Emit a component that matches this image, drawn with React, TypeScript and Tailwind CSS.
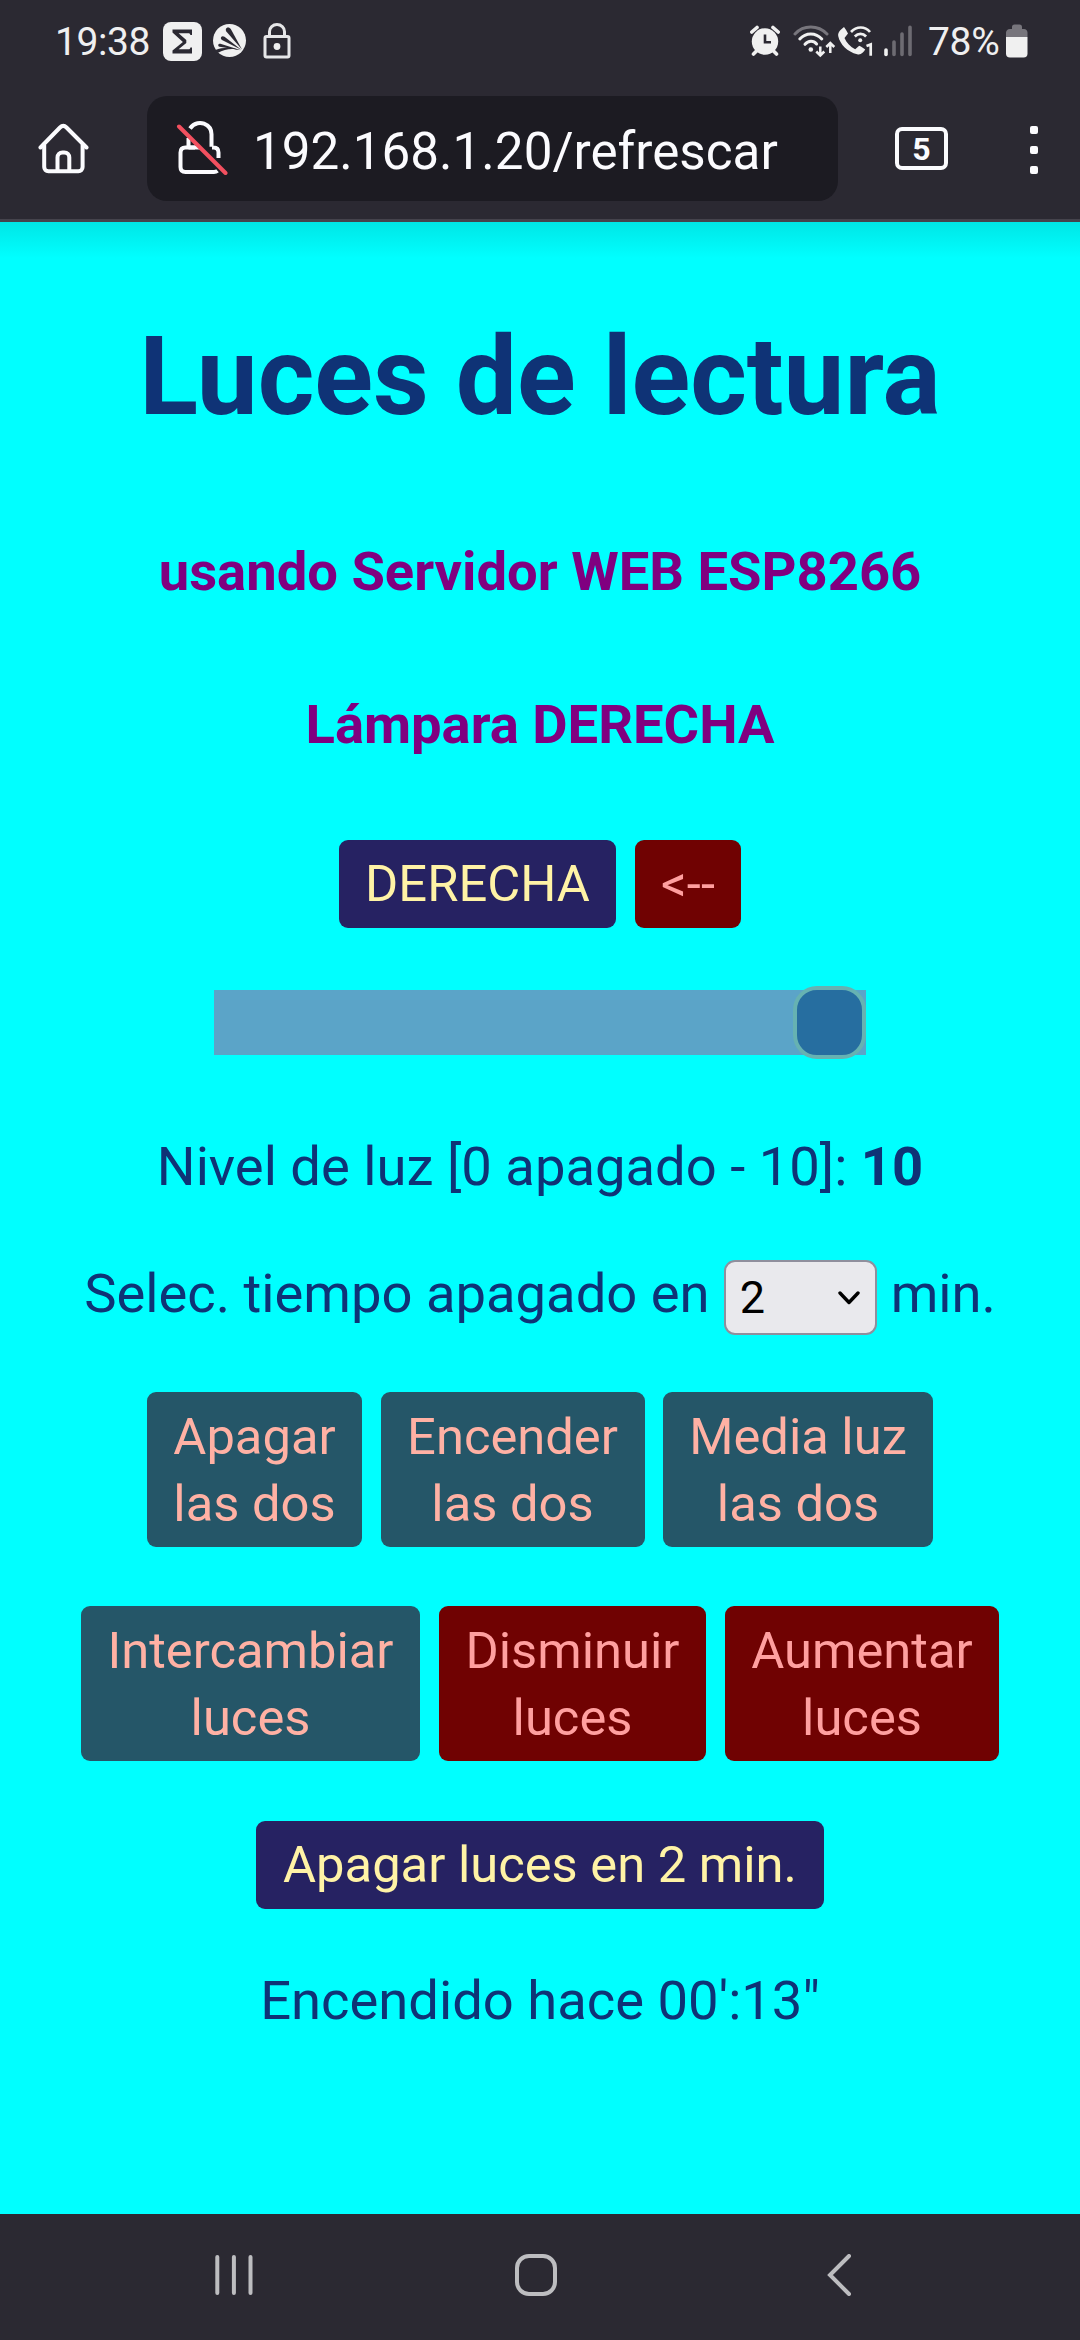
import React from "react";

function StatusBar() {
  return (
    <div className="flex h-[82px] items-center pl-[55px] text-[#efeff0]">
      <span className="mt-px w-[100px] text-[39px] leading-[46px] tracking-[-0.4px]">19:38</span>
      <svg className="ml-[8px]" width="39" height="39" viewBox="0 0 39 39">
        <rect width="39" height="39" rx="8" fill="#f0f0f0" />
        <path d="M9.500 7.500h19.500v5.500h-1.600c-.3-1.300-.8-1.800-2.100-1.800h-9.700l7.700 6.800v3l-7.700 6.200h9.700c1.300 0 1.800-.5 2.100-1.800H29v6H9.500v-3l10.400-8.400-10.400-9.500z" fill="#2b2932" />
      </svg>
      <svg className="ml-[11px]" width="34" height="34" viewBox="0 0 34 34">
        <circle cx="16.500" cy="16.500" r="16.500" fill="#f0f0f0" />
        <g fill="#2b2932">
          <path d="M29 25.500 13.300 7.500c-1-1.600-.5-3.300 1-3.900 1.300-.5 2.700.1 3.500 1.500z" />
          <path d="M28.300 25.800 9 16c-1.200-.9-1.400-2.200-.8-3 .7-1 2.200-1 3.300-.2z" />
          <path d="M28 26.300 6.500 22.700c-1-.3-1.500-1.200-1.200-2 .3-.9 1.200-1.100 2.100-1z" />
          <path d="M27.500 26.500c-7-2.500-15-2-22.800 2.500l-2.300-3c8-3 17-3 25.100.5z" />
        </g>
      </svg>
      <svg className="ml-[16px]" width="28" height="36" viewBox="0 0 28 36" fill="none" stroke="#e6e6e8" strokeWidth="3">
        <rect x="2" y="13.500" width="24" height="20.500" rx="1.500" />
        <path d="M6.500 13V8.500a7.500 7 0 0 1 15 0V13" />
        <circle cx="14" cy="23.500" r="3.400" fill="#efefef" stroke="none" />
      </svg>

      <svg className="ml-[459px]" width="30" height="32" viewBox="0 0 30 32">
        <circle cx="15" cy="16.500" r="13.200" fill="#f0f0f0" />
        <path d="M1.800 7 7 2.500M28.200 7 23 2.500" stroke="#f0f0f0" strokeWidth="3.600" strokeLinecap="round" />
        <path d="m3.500 29 4-4M26.500 29l-4-4" stroke="#f0f0f0" strokeWidth="3.600" strokeLinecap="round" />
        <path d="M15 9.500v7.700h6" fill="none" stroke="#2b2932" strokeWidth="2.600" />
      </svg>
      <svg className="ml-[13px]" width="43" height="34" viewBox="0 0 43 34" fill="none" strokeLinecap="round" strokeWidth="3">
        <path d="M2 10c8.500-9.300 23-9.300 32 0" stroke="#77757c" />
        <path d="M6.800 15c6-6.800 16-6.800 22 0" stroke="#f0f0f0" />
        <path d="M12 20.300c3.400-3.900 8.500-3.900 11.600-.3" stroke="#f0f0f0" />
        <circle cx="17.800" cy="25.500" r="2.300" fill="#f0f0f0" stroke="none" />
        <path d="M27.300 22.500V31M23.300 27.500l4 4 4-4M37.300 29V19.500M33.300 23l4-4 4 4" stroke="#f0f0f0" strokeWidth="2.500" strokeLinecap="butt" />
      </svg>
      <svg className="ml-px" width="38" height="33" viewBox="0 0 38 33" fill="none">
        <path d="M3.500 5 7 2c1.500 2 3 4.200 4 6.500L7.500 13c2 4.800 6 9 10.700 11.200l4-3.400c2.200.9 4.300 2.200 6 3.800-1.500 3-4.500 5.600-8 4.600C10.500 27 3 19.500 1.200 11c-.4-2.500.8-4.500 2.300-6z" fill="#f0f0f0" />
        <path d="M14 7c5.500-6 14-6 19 0M17.800 11.500c3.500-3.600 8-3.600 11.300 0" stroke="#f0f0f0" strokeWidth="2.700" />
        <circle cx="23.200" cy="15.200" r="2" fill="#f0f0f0" />
        <path d="m29.500 21 4.200-1.500v11.300" stroke="#f0f0f0" strokeWidth="2.700" />
      </svg>
      <svg className="ml-[9px]" width="28" height="32" viewBox="0 0 28 32" strokeLinecap="round" strokeWidth="3.600">
        <path d="M2 25v4.500" stroke="#f0f0f0" />
        <path d="M10 17v12.500M18 9v20.500M26 2.200v27.300" stroke="#6d6b72" />
      </svg>
      <span className="ml-[16px] mt-px w-[74px] text-[39px] leading-[46px] tracking-[-0.3px]">78%</span>
      <svg className="ml-[4px]" width="22" height="34" viewBox="0 0 22 34">
        <path d="M0 13V8.500a4 4 0 0 1 4-3.500h2V3a2.500 2.500 0 0 1 2.500-2.500h5A2.500 2.500 0 0 1 16 3v2h2a4 4 0 0 1 3.500 3.500V13z" fill="#77757c" />
        <path d="M0 13h21.500v16.500a4 4 0 0 1-4 4H4a4 4 0 0 1-4-4z" fill="#f0f0f0" />
      </svg>
    </div>
  );
}

function AddressBar() {
  return (
    <div className="flex h-[137px] items-start pl-[38px] pt-[14px]">
      <svg className="mt-[27px]" width="51" height="51" viewBox="0 0 51 51" fill="none" stroke="#fbfbfe" strokeWidth="4" strokeLinecap="round" strokeLinejoin="round">
        <path d="M2.500 24.500 22 4.500c2-2 4.500-2 6.500 0l20 20" />
        <path d="M6.200 22v22c0 2.500 1.800 4.200 4.200 4.200h30c2.400 0 4.200-1.700 4.200-4.200V22" />
        <path d="M19.500 48V34.500c0-3 2-5 5-5h1.800c3 0 5 2 5 5V48" />
      </svg>
      <div className="ml-[58px] flex h-[105px] w-[691px] rounded-[20px] bg-[#1c1b22]">
        <svg className="ml-[29px] mt-[24px]" width="52" height="56" viewBox="0 0 52 56" fill="none" strokeLinecap="round">
          <path
            d="M14 8.500C18.500 2 25 2.500 28 3.700c5 2 7.500 5.500 7.500 10.500v12.500M12.500 18v9M36 27.500h1.500c3.300 0 5 1.800 5 5V38M19 27.500H9.500c-3.300 0-5 1.700-5 5V47c0 3.300 1.700 5 5 5H38c1.500 0 2.700-.5 3.500-1.200"
            stroke="#fbfbfe"
            strokeWidth="4"
            strokeLinecap="butt"
          />
          <path d="M12.500 27.500H24" stroke="#fbfbfe" strokeWidth="4" strokeLinecap="butt" />
          <path d="m3 6.500 46.500 46.500" stroke="#f2505f" strokeWidth="4" />
        </svg>
        <span className="ml-[25px] mt-[21px] text-[51.2px] leading-[70px] text-[#fbfbfe]">192.168.1.20/refrescar</span>
      </div>
      <div className="ml-[57px] mt-[31px] flex h-[43px] w-[53px] items-center justify-center rounded-[7px] border-4 border-[#fbfbfe] text-[32px] font-bold leading-[36px] text-[#fbfbfe]">
        5
      </div>
      <div className="ml-[82px] mt-[30px] flex flex-col gap-[12px]">
        <i className="block size-[8px] rounded-[2px] bg-[#fbfbfe]" />
        <i className="block size-[8px] rounded-[2px] bg-[#fbfbfe]" />
        <i className="block size-[8px] rounded-[2px] bg-[#fbfbfe]" />
      </div>
    </div>
  );
}

const tones = {
  navy: "bg-[#262262] text-[#fff3a6]",
  red: "bg-[#700202] text-[#ff9f9f]",
  teal: "bg-[#255668] text-[#ffb1a4]",
};

const heights = {
  single: "h-[88px] pt-[10px] pb-[12px]",
  double: "h-[155px] pt-[11px] pb-[10px]",
};

type BtnProps = {
  tone: keyof typeof tones;
  lines?: keyof typeof heights;
  width: string;
  children: React.ReactNode;
};

function Btn({ tone, lines = "double", width, children }: BtnProps) {
  return (
    <button className={`rounded-[9px] text-center text-[50.7px] leading-[67px] whitespace-nowrap ${tones[tone]} ${heights[lines]} ${width}`}>
      {children}
    </button>
  );
}

export default function App() {
  return (
    <div className="flex h-[2340px] w-[1080px] flex-col overflow-hidden bg-[#2b2932] font-['Roboto',sans-serif]">
      <StatusBar />
      <AddressBar />
      <div className="h-[3px] bg-[#45434c]" />

      <main className="flex h-[1992px] flex-col items-center bg-[#00ffff] bg-linear-to-b from-[#00e6e6] to-[#00ffff] to-[36px] text-[54.35px] leading-[64px] text-[#0f3376]">
        <h1 className="mt-[95px] text-[108.7px] font-bold leading-[120px] whitespace-nowrap">Luces de lectura</h1>
        <h2 className="mt-[103px] font-bold text-[#800080] whitespace-nowrap">usando Servidor WEB ESP8266</h2>
        <h2 className="mt-[89px] font-bold text-[#800080]">Lámpara DERECHA</h2>

        <div className="mt-[83px] flex gap-[19px]">
          <Btn tone="navy" lines="single" width="w-[277px]">DERECHA</Btn>
          <Btn tone="red" lines="single" width="w-[106px]">&lt;--</Btn>
        </div>

        <div className="mt-[62px] flex h-[65px] w-[652px] items-center justify-end bg-[#5ba4c8]">
          <div className="h-[73px] w-[73px] shrink-0 rounded-[24px] border-4 border-[#66b2b2] bg-[#266ea0]" />
        </div>

        <p className="mt-[80px] whitespace-nowrap">
          Nivel de luz [0 apagado - 10]: <b>10</b>
        </p>

        <div className="mt-[61px] flex h-[75px] items-center whitespace-nowrap">
          <span className="mb-[7px]">Selec. tiempo apagado en</span>
          <div className="ml-[14px] mr-[14px] flex h-[75px] w-[153px] items-center justify-between rounded-[11px] border-2 border-[#8f8f9d] bg-[#e9e9ed] pl-[14px] pr-[15px] text-[45px] text-black">
            <span>2</span>
            <svg width="22" height="16" viewBox="0 0 22 16" fill="none" stroke="black" strokeWidth="3.400" strokeLinecap="round" strokeLinejoin="round">
              <path d="m2 3 9 9.500L20 3" />
            </svg>
          </div>
          <span className="mb-[7px]">min.</span>
        </div>

        <div className="mt-[57px] flex gap-[18.5px]">
          <Btn tone="teal" width="w-[215px]">Apagar<br />las dos</Btn>
          <Btn tone="teal" width="w-[264px]">Encender<br />las dos</Btn>
          <Btn tone="teal" width="w-[270px]">Media luz<br />las dos</Btn>
        </div>

        <div className="mt-[59px] flex gap-[19px]">
          <Btn tone="teal" width="w-[339px]">Intercambiar<br />luces</Btn>
          <Btn tone="red" width="w-[267px]">Disminuir<br />luces</Btn>
          <Btn tone="red" width="w-[274px]">Aumentar<br />luces</Btn>
        </div>

        <div className="mt-[60px] flex">
          <Btn tone="navy" lines="single" width="w-[568px]">Apagar luces en 2 min.</Btn>
        </div>

        <p className="mt-[60px] whitespace-nowrap">Encendido hace 00':13"</p>
      </main>

      <nav className="flex h-[126px] items-start pl-[215px] pt-[40px]">
        <svg width="38" height="42" viewBox="0 0 38 42" stroke="#bdbdc0" strokeWidth="4" strokeLinecap="round">
          <path d="M2.300 3v36M18.900 3v36M35.500 3v36" />
        </svg>
        <svg className="ml-[262px]" width="42" height="42" viewBox="0 0 42 42" fill="none" stroke="#bdbdc0" strokeWidth="4">
          <rect x="2" y="2" width="38" height="38" rx="12" />
        </svg>
        <svg className="ml-[270px]" width="25" height="42" viewBox="0 0 25 42" fill="none" stroke="#bdbdc0" strokeWidth="4" strokeLinecap="round">
          <path d="M22 2 3 21l19 19" />
        </svg>
      </nav>
    </div>
  );
}
